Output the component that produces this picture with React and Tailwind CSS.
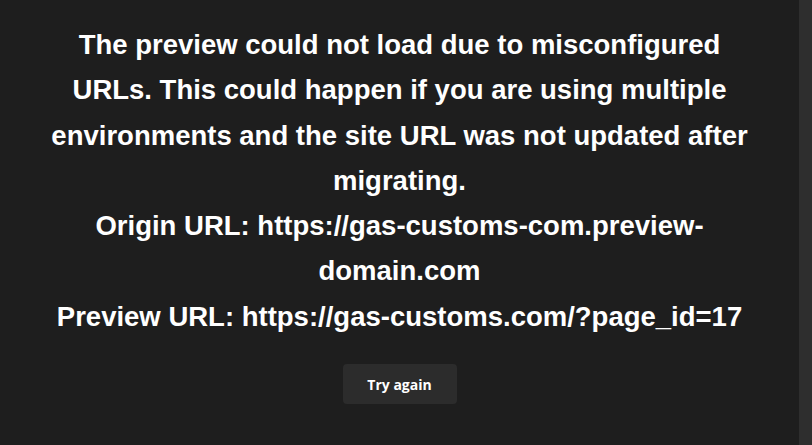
import React from 'react';

const App = () => {
  return (
    <div className="h-[445px] w-full flex bg-[#1e1e1e] overflow-hidden">
      <div className="flex-1 flex flex-col items-center justify-center pb-[19px]">
        <div
          className="w-[706px] text-center text-white font-bold text-[27.5px] leading-[45.3px]"
          style={{ fontFamily: '"Liberation Sans", Arial, sans-serif' }}
        >
          <p>
            The preview could not load due to misconfigured URLs. This could happen if you are using
            multiple environments and the site URL was not updated after migrating.
          </p>
          <p>Origin URL: https://gas-customs-com.preview-domain.com</p>
          <p>Preview URL: https://gas-customs.com/?page_id=17</p>
        </div>
        <button
          className="mt-[25px] w-[114px] h-[40px] rounded-[4px] bg-[#2c2c2c] text-white text-[14px] font-bold"
          style={{ fontFamily: '"Open Sans", "Noto Sans", sans-serif' }}
        >
          Try again
        </button>
      </div>
      <div className="w-[13px] shrink-0 bg-[#2e2e2e]" />
    </div>
  );
};

export default App;
